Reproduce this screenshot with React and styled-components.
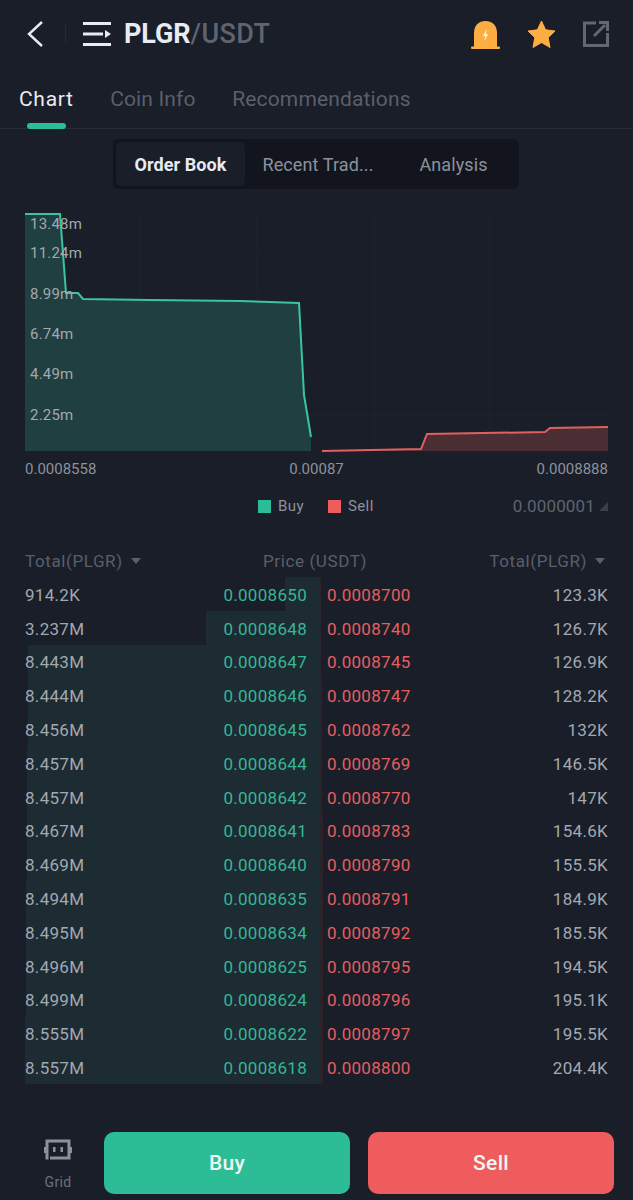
import React from "react";
import styled, { createGlobalStyle } from "styled-components";

const GlobalStyle = createGlobalStyle`
  html, body {
    margin: 0;
    padding: 0;
    background: #191e29;
  }
  * {
    box-sizing: border-box;
  }
`;

const Page = styled.div`
  width: 633px;
  height: 1200px;
  background: #191e29;
  font-family: Roboto, "Liberation Sans", sans-serif;
  color: #e8ebf2;
  overflow: hidden;
`;

const TopBar = styled.div`
  display: flex;
  align-items: center;
  height: 68px;
  padding: 0 24px 0 26px;
`;
const IconBtn = styled.svg`
  display: block;
  flex-shrink: 0;
`;
const Divider = styled.div`
  width: 1px;
  height: 20px;
  margin: 0 17px 0 21px;
  background: #232835;
`;
const Pair = styled.div`
  font-size: 27px;
  font-weight: 700;
  margin-left: 13px;
  letter-spacing: -0.1px;
  color: #e8ebf2;
  span {
    color: #5f6470;
    font-weight: 500;
    letter-spacing: 0.4px;
  }
`;
const TopActions = styled.div`
  margin-left: auto;
  display: flex;
  align-items: center;
  gap: 27px;
`;

const Tabs = styled.div`
  display: flex;
  height: 61px;
  padding: 0 19px;
  gap: 36.5px;
  border-bottom: 1px solid #272c38;
`;
const Tab = styled.div`
  position: relative;
  font-size: 21px;
  line-height: 62px;
  letter-spacing: ${(p) => (p.$active ? "0.7px" : "0.15px")};
  color: ${(p) => (p.$active ? "#e8ebf2" : "#5a5f6b")};
  &::after {
    content: "";
    display: ${(p) => (p.$active ? "block" : "none")};
    position: absolute;
    left: 8px;
    right: 8px;
    bottom: -1px;
    height: 6px;
    border-radius: 3px;
    background: #2dbd96;
  }
`;

const SegmentWrap = styled.div`
  display: flex;
  justify-content: center;
  padding-top: 10px;
  padding-right: 1px;
`;
const Segment = styled.div`
  display: flex;
  width: 406px;
  height: 50px;
  padding: 3px;
  border-radius: 6px;
  background: #12151e;
`;
const SegmentItem = styled.div`
  width: ${(p) => p.$w}px;
  display: flex;
  align-items: center;
  justify-content: center;
  font-size: 18px;
  letter-spacing: 0.1px;
  border-radius: 5px;
  font-weight: ${(p) => (p.$active ? 700 : 400)};
  color: ${(p) => (p.$active ? "#e8ebf2" : "#8d919c")};
  background: ${(p) => (p.$active ? "#191e29" : "transparent")};
`;

const ChartBox = styled.div`
  position: relative;
  height: 240px;
  margin: 23px 25px 0;
`;
const ChartSvg = styled.svg`
  display: block;
  position: absolute;
  inset: 0;
`;
const YLabel = styled.div`
  position: absolute;
  left: 5px;
  top: ${(p) => p.$top}px;
  font-size: 15px;
  line-height: 18px;
  letter-spacing: 0.2px;
  color: #a3a8b0;
`;

const XAxis = styled.div`
  display: flex;
  justify-content: space-between;
  margin: 8px 25px 0;
  font-size: 15px;
  line-height: 18px;
  letter-spacing: 0;
  color: #8d919c;
`;

const LegendRow = styled.div`
  display: flex;
  align-items: center;
  height: 24px;
  margin-top: 16px;
  padding: 0 25px 0 258px;
`;
const LegendItem = styled.div`
  display: flex;
  align-items: center;
  gap: 7px;
  margin-right: 24px;
  font-size: 15px;
  letter-spacing: 0.4px;
  color: #8d919c;
`;
const Swatch = styled.i`
  display: block;
  width: 13px;
  height: 13px;
  background: ${(p) => p.$color};
`;
const Precision = styled.div`
  margin-left: auto;
  display: flex;
  align-items: center;
  gap: 4px;
  font-size: 17px;
  letter-spacing: 0.15px;
  color: #5f6470;
`;

const HeadRow = styled.div`
  display: flex;
  align-items: center;
  justify-content: space-between;
  height: 26px;
  margin-top: 30px;
  padding: 0 28px 0 25px;
  font-size: 17px;
  letter-spacing: 0.6px;
  color: #5a5f6b;
`;
const HeadCell = styled.div`
  display: flex;
  align-items: center;
  gap: 8px;
`;
const Caret = styled.i`
  width: 0;
  height: 0;
  border-left: 5px solid transparent;
  border-right: 5px solid transparent;
  border-top: 6px solid #5a5f6b;
`;

const Book = styled.div`
  margin-top: 3px;
`;
const Row = styled.div`
  position: relative;
  display: grid;
  grid-template-columns: 282px 281px;
  column-gap: 20px;
  height: 33.8px;
  padding: 0 25px;
  font-size: 17px;
  letter-spacing: 0.3px;
`;
const BuyDepth = styled.div`
  position: absolute;
  top: 0;
  bottom: 0;
  right: 313px;
  background: #1d2b33;
`;
const SellDepth = styled.div`
  position: absolute;
  top: 0;
  bottom: 0;
  left: 320px;
  background: #2a2329;
`;
const Side = styled.div`
  position: relative;
  display: flex;
  align-items: center;
  justify-content: space-between;
  padding-top: 2px;
  white-space: nowrap;
`;
const Total = styled.span`
  color: #a3a8b0;
`;
const Price = styled.span`
  color: ${(p) => (p.$sell ? "#e55f5f" : "#36b795")};
`;

const Footer = styled.div`
  display: flex;
  align-items: flex-start;
  margin-top: 48px;
  padding: 0 19px 0 44px;
`;
const GridBtn = styled.div`
  width: 28px;
  margin-right: 32px;
  display: flex;
  flex-direction: column;
  align-items: center;
  padding-top: 7px;
  font-size: 14px;
  letter-spacing: 0.3px;
  color: #6d717c;
  gap: 13px;
`;
const ActionBtn = styled.div`
  height: 62px;
  width: ${(p) => p.$w}px;
  margin-left: ${(p) => p.$ml || 0}px;
  border-radius: 10px;
  display: flex;
  align-items: center;
  justify-content: center;
  font-size: 21px;
  font-weight: 500;
  letter-spacing: 0.3px;
  color: #eef7f4;
  background: ${(p) => p.$color};
`;

const rows = [
  ["914.2K", "0.0008650", "0.0008700", "123.3K", 35, 1],
  ["3.237M", "0.0008648", "0.0008740", "126.7K", 114, 1],
  ["8.443M", "0.0008647", "0.0008745", "126.9K", 292, 1],
  ["8.444M", "0.0008646", "0.0008747", "128.2K", 292, 2],
  ["8.456M", "0.0008645", "0.0008762", "132K", 292, 2],
  ["8.457M", "0.0008644", "0.0008769", "146.5K", 293, 2],
  ["8.457M", "0.0008642", "0.0008770", "147K", 293, 2],
  ["8.467M", "0.0008641", "0.0008783", "154.6K", 293, 3],
  ["8.469M", "0.0008640", "0.0008790", "155.5K", 293, 3],
  ["8.494M", "0.0008635", "0.0008791", "184.9K", 294, 3],
  ["8.495M", "0.0008634", "0.0008792", "185.5K", 294, 3],
  ["8.496M", "0.0008625", "0.0008795", "194.5K", 294, 3],
  ["8.499M", "0.0008624", "0.0008796", "195.1K", 294, 3],
  ["8.555M", "0.0008622", "0.0008797", "195.5K", 295, 3],
  ["8.557M", "0.0008618", "0.0008800", "204.4K", 295, 3],
];

const yLabels = [
  ["13.48m", 3],
  ["11.24m", 32],
  ["8.99m", 73],
  ["6.74m", 113],
  ["4.49m", 153],
  ["2.25m", 194],
];

function DepthChart() {
  return (
    <ChartBox>
      <ChartSvg width="583" height="240" viewBox="0 0 583 240">
        {[41, 81, 122, 162, 203].map((y) => (
          <line key={y} x1="0" x2="583" y1={y} y2={y} stroke="#1e2330" />
        ))}
        {[115, 232, 349, 465].map((x) => (
          <line key={x} x1={x} x2={x} y1="2" y2="239" stroke="#1e2330" />
        ))}
        <path
          d="M0 2H35L41 81H53L58 87L125 88L215 89L274 91L279 183L286 225V239H0Z"
          fill="#1f3f41"
        />
        <path
          d="M0 2H35L41 81H53L58 87L125 88L215 89L274 91L279 183L286 225"
          fill="none"
          stroke="#3cc4a0"
          strokeWidth="2"
        />
        <path
          d="M297 239L396 237L402 222L520 220L525 216L583 215V239Z"
          fill="#4b2e33"
        />
        <path
          d="M297 239L396 237L402 222L520 220L525 216L583 215"
          fill="none"
          stroke="#e0605f"
          strokeWidth="2"
        />
      </ChartSvg>
      {yLabels.map(([t, top]) => (
        <YLabel key={t} $top={top}>
          {t}
        </YLabel>
      ))}
    </ChartBox>
  );
}

export default function App() {
  return (
    <Page>
      <GlobalStyle />
      <TopBar>
        <IconBtn width="18" height="28" viewBox="0 0 18 28">
          <path d="M16 2L3 14L16 26" fill="none" stroke="#e8ebf2" strokeWidth="2.4" />
        </IconBtn>
        <Divider />
        <IconBtn width="28" height="26" viewBox="0 0 28 26">
          <path d="M0 2.5H28M0 13H20M0 23.5H28" stroke="#e8ebf2" strokeWidth="3" />
          <path d="M22 9L28 13L22 17Z" fill="#e8ebf2" />
        </IconBtn>
        <Pair>
          PLGR<span>/USDT</span>
        </Pair>
        <TopActions>
          <IconBtn width="29" height="29" viewBox="0 0 29 29">
            <path d="M3 28V13C3 5 8 1 14.5 1S26 5 26 13V28Z" fill="#fdae42" />
            <rect x="0" y="26.5" width="29" height="2.5" rx="1" fill="#fdae42" />
            <path d="M15.5 9L12 16H14.2L13.5 21L17 14H14.8Z" fill="#fff3d9" />
          </IconBtn>
          <IconBtn width="29" height="29" viewBox="0 0 29 29">
            <path
              d="M14.5 1L18.6 9.8L28 11L21.2 17.6L23 27.5L14.5 22.6L6 27.5L7.8 17.6L1 11L10.4 9.8Z"
              fill="#fdae42"
              stroke="#fdae42"
              strokeLinejoin="round"
            />
          </IconBtn>
          <IconBtn width="26" height="26" viewBox="0 0 26 26">
            <path
              d="M13 2H1.5V24.5H24.5V12"
              fill="none"
              stroke="#626773"
              strokeWidth="3"
            />
            <path d="M11 15L22 4" stroke="#626773" strokeWidth="3" />
            <path d="M16 1.5H24.5V10" fill="none" stroke="#626773" strokeWidth="3" />
          </IconBtn>
        </TopActions>
      </TopBar>

      <Tabs>
        <Tab $active>Chart</Tab>
        <Tab>Coin Info</Tab>
        <Tab>Recommendations</Tab>
      </Tabs>

      <SegmentWrap>
        <Segment>
          <SegmentItem $active $w={129}>
            Order Book
          </SegmentItem>
          <SegmentItem $w={146}>Recent Trad...</SegmentItem>
          <SegmentItem $w={125}>Analysis</SegmentItem>
        </Segment>
      </SegmentWrap>

      <DepthChart />

      <XAxis>
        <span>0.0008558</span>
        <span>0.00087</span>
        <span>0.0008888</span>
      </XAxis>

      <LegendRow>
        <LegendItem>
          <Swatch $color="#2dbd96" />
          Buy
        </LegendItem>
        <LegendItem>
          <Swatch $color="#f05c5c" />
          Sell
        </LegendItem>
        <Precision>
          0.0000001
          <svg width="9" height="9" viewBox="0 0 9 9">
            <path d="M9 0V9H0Z" fill="#3a3e49" />
          </svg>
        </Precision>
      </LegendRow>

      <HeadRow>
        <HeadCell>
          Total(PLGR) <Caret />
        </HeadCell>
        <HeadCell>Price (USDT)</HeadCell>
        <HeadCell>
          Total(PLGR) <Caret />
        </HeadCell>
      </HeadRow>

      <Book>
        {rows.map((r) => (
          <Row key={r[1]}>
            <BuyDepth style={{ width: r[4] }} />
            <SellDepth style={{ width: r[5] }} />
            <Side>
              <Total>{r[0]}</Total>
              <Price>{r[1]}</Price>
            </Side>
            <Side>
              <Price $sell>{r[2]}</Price>
              <Total>{r[3]}</Total>
            </Side>
          </Row>
        ))}
      </Book>

      <Footer>
        <GridBtn>
          <svg width="28" height="22" viewBox="0 0 28 22">
            <path
              d="M3 20.5V2H25V19H6"
              fill="none"
              stroke="#8d919c"
              strokeWidth="3"
            />
            <rect x="0" y="8" width="2" height="6" fill="#8d919c" />
            <rect x="26" y="8" width="2" height="6" fill="#8d919c" />
            <rect x="9" y="8" width="2.5" height="5" fill="#8d919c" />
            <rect x="16.5" y="8" width="2.5" height="5" fill="#8d919c" />
          </svg>
          Grid
        </GridBtn>
        <ActionBtn $w={246} $color="#2dbd96">
          Buy
        </ActionBtn>
        <ActionBtn $w={246} $ml={18} $color="#ee5c5d">
          Sell
        </ActionBtn>
      </Footer>
    </Page>
  );
}
